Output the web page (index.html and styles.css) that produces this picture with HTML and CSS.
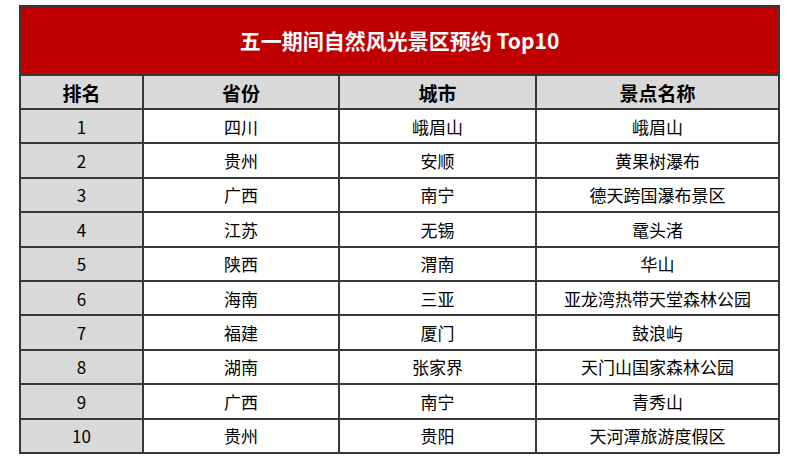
FILE: index.html
```html
<!DOCTYPE html>
<html lang="zh">
<head>
<meta charset="utf-8">
<link rel="stylesheet" href="styles.css">
</head>
<body>
<div class="page">
<table class="rank">
<colgroup>
<col class="c1"><col class="c2"><col class="c3"><col class="c4">
</colgroup>
<thead>
<tr class="title-row"><th colspan="4" class="title">五一期间自然风光景区预约 Top10</th></tr>
<tr class="head-row"><th class="grey">排名</th><th class="grey">省份</th><th class="grey">城市</th><th class="grey">景点名称</th></tr>
</thead>
<tbody>
<tr><td class="grey">1</td><td>四川</td><td>峨眉山</td><td>峨眉山</td></tr>
<tr><td class="grey">2</td><td>贵州</td><td>安顺</td><td>黄果树瀑布</td></tr>
<tr><td class="grey">3</td><td>广西</td><td>南宁</td><td>德天跨国瀑布景区</td></tr>
<tr><td class="grey">4</td><td>江苏</td><td>无锡</td><td>鼋头渚</td></tr>
<tr><td class="grey">5</td><td>陕西</td><td>渭南</td><td>华山</td></tr>
<tr><td class="grey">6</td><td>海南</td><td>三亚</td><td>亚龙湾热带天堂森林公园</td></tr>
<tr><td class="grey">7</td><td>福建</td><td>厦门</td><td>鼓浪屿</td></tr>
<tr><td class="grey">8</td><td>湖南</td><td>张家界</td><td>天门山国家森林公园</td></tr>
<tr><td class="grey">9</td><td>广西</td><td>南宁</td><td>青秀山</td></tr>
<tr><td class="grey">10</td><td>贵州</td><td>贵阳</td><td>天河潭旅游度假区</td></tr>
</tbody>
</table>
</div>
</body>
</html>
```

FILE: styles.css
```css
html, body {
  margin: 0;
  padding: 0;
  background: #ffffff;
}
.page {
  padding: 5px 0 0 19px;
}
.rank {
  width: 759px;
  table-layout: fixed;
  border-collapse: collapse;
  font-family: "Noto Sans CJK SC", "Noto Sans", sans-serif;
  color: #000000;
}
.c1 { width: 123px; }
.c2 { width: 196px; }
.c3 { width: 197px; }
.c4 { width: 243px; }
.rank th, .rank td {
  border: 2px solid #383838;
  text-align: center;
  padding: 0;
  line-height: 1;
}
.title-row { height: 69px; }
.title {
  background: #c00000;
  color: #ffffff;
  font-size: 21px;
  font-weight: 700;
  padding-top: 2px;
}
.head-row { height: 34px; }
.head-row th {
  font-size: 19px;
  font-weight: 700;
}
.rank tbody tr { height: 34.4px; }
.rank td {
  font-size: 17px;
  font-weight: 400;
}
.grey { background: #d9d9d9; }
```
